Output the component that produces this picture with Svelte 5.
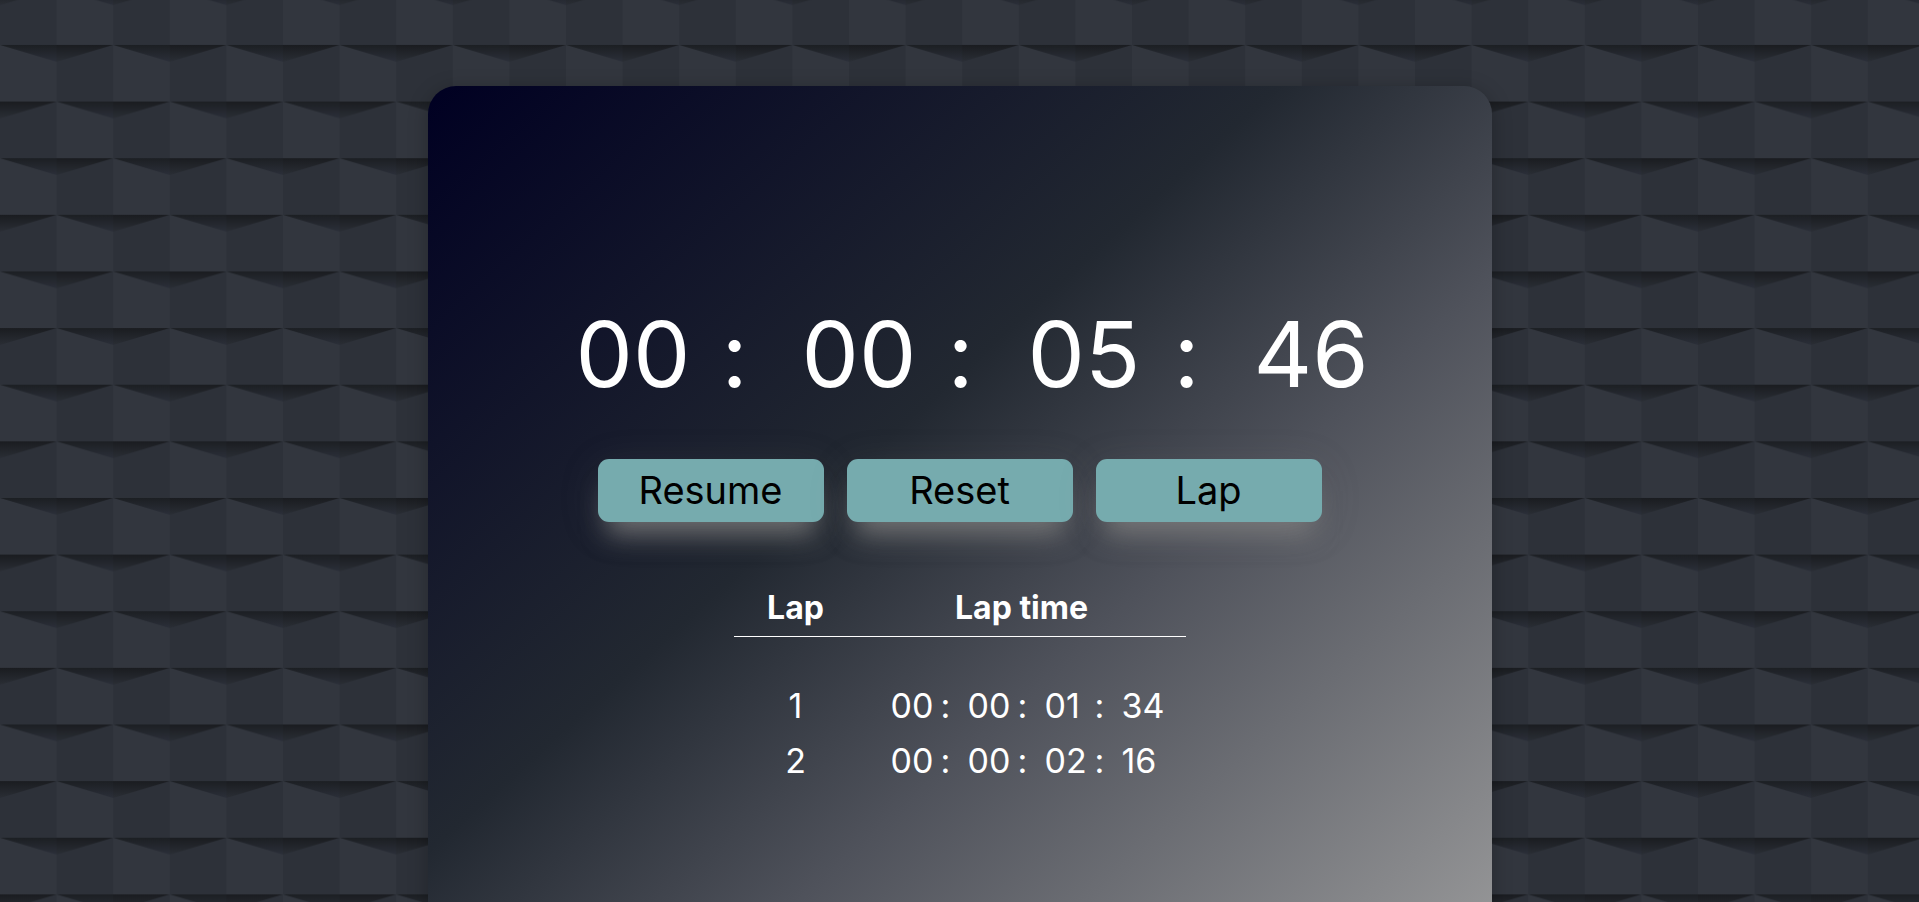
<script>
  import { onDestroy } from 'svelte';

  let elapsed = $state(546);
  let running = $state(false);
  let laps = $state([134, 216]);
  let timer;

  const pad = (n) => String(n).padStart(2, '0');
  // Splits hundredths of a second into hours, minutes, seconds and hundredths.
  const split = (t) => [
    pad(Math.floor(t / 360000)),
    pad(Math.floor(t / 6000) % 60),
    pad(Math.floor(t / 100) % 60),
    pad(t % 100)
  ];

  let parts = $derived(split(elapsed));
  let label = $derived(running ? 'Pause' : elapsed > 0 ? 'Resume' : 'Start');

  function toggle() {
    running = !running;
    clearInterval(timer);
    if (running) timer = setInterval(() => (elapsed += 1), 10);
  }

  function reset() {
    clearInterval(timer);
    running = false;
    elapsed = 0;
    laps = [];
  }

  function lap() {
    laps = [...laps, elapsed];
  }

  onDestroy(() => clearInterval(timer));
</script>

<div class="page">
  <svg class="bricks" aria-hidden="true">
    <defs>
      <linearGradient id="shade-a" x1="0" y1="0" x2="0" y2="1">
        <stop offset="0" stop-color="#1c1f23" />
        <stop offset="1" stop-color="#2b2f39" />
      </linearGradient>
      <linearGradient id="shade-b" x1="0" y1="0" x2="0" y2="1">
        <stop offset="0" stop-color="#1a1c20" />
        <stop offset="1" stop-color="#2a2e35" />
      </linearGradient>
      <pattern id="brick" width="113.2" height="113.26" y="-11.7" patternUnits="userSpaceOnUse">
        <rect width="114" height="114" fill="#2d3139" />
        <rect x="56.6" width="57" height="56.63" fill="#32363e" />
        <rect y="56.63" width="56.6" height="57" fill="#32363e" />
        <path d="M0 0H56.6L0 17Z" fill="url(#shade-b)" />
        <path d="M56.6 0H113.2V17Z" fill="url(#shade-a)" />
        <path d="M0 56.63H56.6V73.6Z" fill="url(#shade-a)" />
        <path d="M56.6 56.63H113.2L56.6 73.6Z" fill="url(#shade-b)" />
      </pattern>
    </defs>
    <rect width="100%" height="100%" fill="url(#brick)" />
  </svg>

  <main class="card">
    <div class="clock" role="timer">
      {#each parts as part, i}
        <div class="unit">
          <span class="digits">{part}</span>{#if i < 3}<span>:</span>{/if}
        </div>
      {/each}
    </div>

    <div class="actions">
      <button type="button" onclick={toggle}>{label}</button>
      <button type="button" onclick={reset}>Reset</button>
      <button type="button" onclick={lap}>Lap</button>
    </div>

    <table>
      <thead>
        <tr><th class="num" scope="col">Lap</th><th scope="col">Lap time</th></tr>
      </thead>
      <tbody>
        {#each laps as time, n}
          <tr>
            <td class="num">{n + 1}</td>
            <td>
              <div class="time">
                {#each split(time) as part, i}
                  <div class="unit">
                    <span class="digits">{part}</span>{#if i < 3}<span>:</span>{/if}
                  </div>
                {/each}
              </div>
            </td>
          </tr>
        {/each}
      </tbody>
    </table>
  </main>
</div>

<style>
  :global(body) {
    margin: 0;
    background: #2d3139;
  }

  .page {
    position: relative;
    display: flex;
    justify-content: center;
    align-items: flex-start;
    box-sizing: border-box;
    height: 100vh;
    padding-top: 86px;
    overflow: hidden;
    font-family: Inter, 'Open Sans', sans-serif;
    color: #fff;
  }

  .bricks {
    position: absolute;
    inset: 0;
    width: 100%;
    height: 100%;
  }

  .card {
    position: relative;
    display: flex;
    flex-direction: column;
    align-items: center;
    box-sizing: border-box;
    width: 1064px;
    max-width: 100%;
    min-height: 957px;
    padding-top: 208px;
    border-radius: 28px;
    background: linear-gradient(to bottom right, #000022, #222831 40%, #4f525b 60%, #a2a2a2);
    box-shadow: 0 4px 20px rgba(0, 0, 0, 0.25);
  }

  .unit {
    display: flex;
  }

  .clock {
    display: flex;
    padding-left: 26px;
    font-size: 91px;
    line-height: 120px;
  }

  .clock .unit {
    width: 226px;
  }

  .clock .unit:last-child {
    width: 116px;
  }

  .clock .digits {
    width: 146px;
  }

  .actions {
    display: flex;
    gap: 23px;
    margin-top: 45px;
  }

  button {
    width: 226px;
    height: 63px;
    padding: 0 0 2px;
    border: 0;
    border-radius: 11px;
    background: #76abae;
    box-shadow:
      0 8px 40px rgba(128, 128, 128, 0.15),
      0 22px 26px -10px rgba(128, 128, 128, 0.8);
    font-family: inherit;
    font-size: 38px;
    line-height: 44px;
    color: #000;
    cursor: pointer;
  }

  table {
    width: 452px;
    margin-top: 62px;
    border-collapse: collapse;
    table-layout: fixed;
    text-align: center;
  }

  th {
    padding: 0 0 4px;
    border-bottom: 1px solid #fff;
    font-size: 32px;
    font-weight: 700;
    line-height: 48px;
  }

  .num {
    width: 124px;
  }

  tbody::before {
    content: '';
    display: block;
    height: 41px;
  }

  td {
    padding: 0;
    font-size: 34px;
    line-height: 55px;
  }

  .time {
    display: flex;
    justify-content: center;
    padding-left: 12px;
    text-align: left;
  }

  .time .unit {
    width: 77px;
  }

  .time .unit:last-child {
    width: 43px;
  }

  .time .digits {
    width: 50px;
  }
</style>
